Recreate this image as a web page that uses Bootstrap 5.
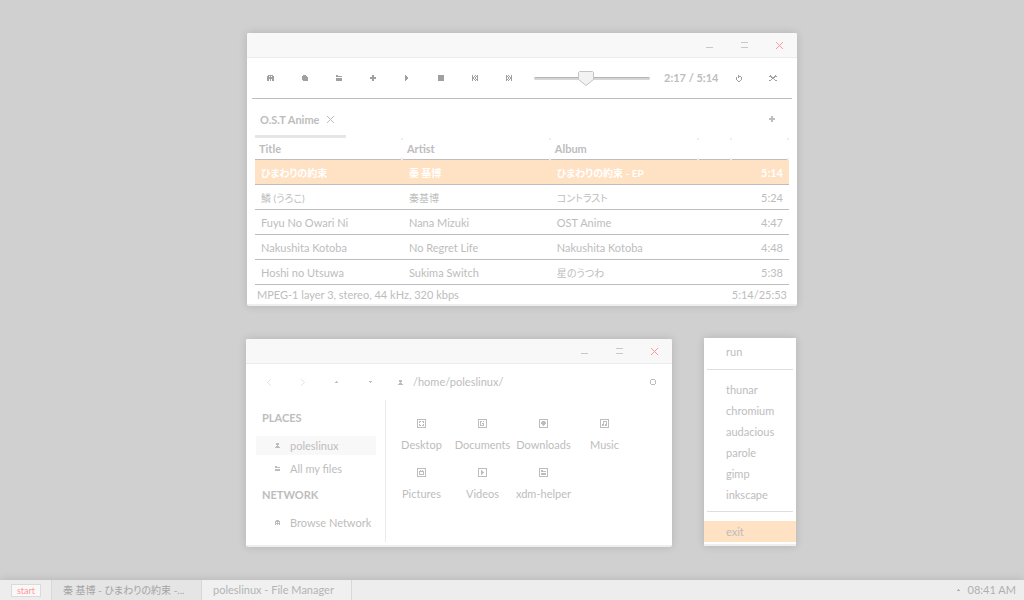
<!DOCTYPE html>
<html lang="en">
<head>
<meta charset="utf-8">
<meta name="viewport" content="width=device-width, initial-scale=1">
<title>Desktop</title>
<link href="https://cdn.jsdelivr.net/npm/bootstrap@5.3.0/dist/css/bootstrap.min.css" rel="stylesheet">
<style>
:root{--ink:#bdbdbd;--icon:#a0a0a0;--peach:#ffe1c3;--line:#bdbdbd;--soft:#ebebeb}
body{background:#d0d0d0;color:var(--ink);font:11px/14px Lato,"Noto Sans CJK JP",sans-serif;min-height:100vh}
button,input{font:inherit}
a,a:hover{color:inherit;text-decoration:none}
svg{display:block;fill:currentColor;shape-rendering:crispEdges}
.ja{font-size:10px;font-feature-settings:"palt"}
.desk{min-height:calc(100vh - 20px)}
.win{position:absolute;background:#fff;border-bottom:2px solid #eee;border-radius:2px;box-shadow:0 0 8px rgba(0,0,0,.14)}
.player{left:247px;top:33px;width:550px}
.files{left:246px;top:339px;width:426px}
.launch{left:704px;top:338px;width:92px;border-radius:0}
.titlebar{height:25px;background:#f8f8f8;border-bottom:1px solid var(--soft);border-radius:2px 2px 0 0}
.tool{border:0;background:none;padding:0 1px 0 0;width:34px;height:24px;display:flex;align-items:center;justify-content:center;color:var(--icon)}
.titlebar .tool{width:35px;padding:0;color:#c8c8c8}
.titlebar .shut svg{color:#f99;fill:#f99}
.tools{height:41px;margin:0 5px;padding:0 2px;border-bottom:1px solid var(--line)}
.seek{appearance:none;width:116px;height:16px;margin:0 14px 0 8px;background:none}
.seek::-webkit-slider-runnable-track{height:3px;background:#d6d6d6;border-top:1px solid #b4b4b4;border-radius:2px}
.seek::-webkit-slider-thumb{appearance:none;width:16px;height:15px;margin-top:-7px;border:0;background:url("data:image/svg+xml,%3Csvg xmlns='http://www.w3.org/2000/svg' width='16' height='15'%3E%3Cpath d='M1.5.5h13l1 1v7l-7.5 6-7.5-6v-7z' fill='%23f2f2f2' stroke='%23c4c4c4'/%3E%3C/svg%3E")}
.tabs{height:39px;padding:0 8px}
.tab{width:91px;padding:5px 0 0 5px;border-bottom:3px solid #e6e6e6}
.tabs .tool{color:var(--ink)}
.tab .tool{width:24px}
.pl{width:calc(100% - 16px);margin:0 8px;table-layout:fixed;border-collapse:separate;border-spacing:0;white-space:nowrap}
.pl th{height:22px;padding:0 4px;border-bottom:1px solid var(--line);position:relative}
.pl th::before,.pl th::after{content:"";position:absolute;right:0;width:2px;height:2px;background:#eee}
.pl th::before{top:0}.pl th::after{bottom:-1px}
.pl td{height:25px;padding:2px 6px 0;border-bottom:1px solid var(--line)}
.pl .now td{background:var(--peach);color:#fff;font-weight:700}
.status{padding:3px 10px 2px}
.nav-row{height:36px;padding:0 2px 0 6px}
.nav-row .tool{color:var(--ink)}
.nav-row .off{color:#e4e4e4}
.side{width:140px;border-right:1px solid var(--soft);padding:10px 9px 10px 10px}
.side h2{font-size:11px;line-height:16px;font-weight:700;margin:0 6px 10px}
.side ul+h2{margin-top:9px}
.side a{height:19px;padding-left:18px;gap:9px}
.side .on{background:#f8f8f8}
.grid{display:grid;grid-template-columns:repeat(auto-fill,61px);grid-auto-rows:33px;row-gap:16px;padding:19px 5px}
.grid a{gap:10px}
.body-row{padding-bottom:3px}
.launch{padding:3px 0 2px}
.launch a{display:block;line-height:21px;padding-left:22px}
.launch a:first-child{margin-bottom:7px}
.launch hr{margin:0 3px 9px;border-color:#dedede;opacity:1}
.launch div a:first-child{margin:0}
.launch div{margin-bottom:6px}
.launch .exit{background:var(--peach)}
.bar{height:20px;background:#ededed;box-shadow:0 0 8px rgba(0,0,0,.14);position:relative}
.start{margin:4px 10px 3px 11px;width:30px;border:1px solid #dadada;background:#f8f8f8;color:#f99;padding:0;font-size:9px;line-height:10px}
.task{width:150px;border:0;border-left:1px solid #d8d8d8;background:#f0f0f0;color:#b4b4b4;padding:0 12px 0 11px;text-align:left}
.task.on{background:#e5e5e5;color:#a4a4a4}
.task:last-of-type{border-right:1px solid #d8d8d8;width:151px}
.clock{color:#b0b0b0}
</style>
</head>
<body>
<svg width="0" height="0" class="position-absolute" aria-hidden="true">
<symbol id="ghost" viewBox="0 0 7 6"><path d="M1 0h5v1h1v5H5V4H4v2H3V4H2v2H0V1h1zM2 1v1h1V1zM4 1v1h1V1z" fill-rule="evenodd"/></symbol>
<symbol id="ghost-s" viewBox="0 0 5 5"><path d="M1 0h3v1h1v4H4V4H3v1H2V4H1v1H0V1h1zM1 2v1h1V2zM3 2v1h1V2z" fill-rule="evenodd"/></symbol>
<symbol id="disc" viewBox="0 0 6 6"><path d="M1 0h3v1h1v1h1v4H1V5H0V1h1z"/></symbol>
<symbol id="folder" viewBox="0 0 6 6"><path d="M0 0h2v1h4v1H0zM0 3h6v3H0z"/></symbol>
<symbol id="folder-s" viewBox="0 0 5 5"><path d="M0 0h2v1h3v1H0zM0 3h5v2H0z"/></symbol>
<symbol id="plus" viewBox="0 0 6 6"><path d="M2 0h2v2h2v2H4v2H2V4H0V2h2z"/></symbol>
<symbol id="play" viewBox="0 0 3 6"><path d="M0 0h1v1h1v1h1v2H2v1H1v1H0z"/></symbol>
<symbol id="stop" viewBox="0 0 6 6"><path d="M0 0h6v6H0z"/></symbol>
<symbol id="prev" viewBox="0 0 6 6"><path d="M0 0h1v6H0zM3 0h1v1H3zM5 0h1v6H5V5H4V4h1V2H4V1h1zM2 1h1v1H2zM1 2h1v2H1zM3 2h1v2H3zM2 4h1v1H2zM3 5h1v1H3z"/></symbol>
<symbol id="cross" viewBox="0 0 7 7"><path d="M0 0h1v1h1v1h1v1h1V2h1V1h1V0h1v1H6v1H5v1H4v1h1v1h1v1h1v1H6V6H5V5H4V4H3v1H2v1H1v1H0V6h1V5h1V4h1V3H2V2H1V1H0z"/></symbol>
<symbol id="reload" viewBox="0 0 6 7"><path d="M2 0h1v1h1v1H3v1H2zM0 2h1v3H0zM1 5h1v1H1zM2 6h2v1H2zM4 5h1v1H4zM5 2h1v3H5zM4 1h1v1H4z"/></symbol>
<symbol id="shuf" viewBox="0 0 8 6"><path d="M1 0h1v1h1v1h2V1h1V0h1v1h1v1H6v1H5v1h1v1h1v1H6V5H5V4H3v1H2v1H1V5h1V4h1V3H2V2H0V1h1zM0 5h1v1H0zM7 5h1v1H7z"/></symbol>
<symbol id="user" viewBox="0 0 5 5"><path d="M1 0h3v2H3v1h1v1h1v1H0V4h1V3h1V2H1z"/></symbol>
<symbol id="min" viewBox="0 0 7 6"><path d="M0 5h7v1H0z"/></symbol>
<symbol id="max" viewBox="0 0 7 6"><path d="M0 0h7v1H0zM0 5h7v1H0z"/></symbol>
<symbol id="back" viewBox="0 0 4 7"><path d="M3 0h1v1H3zM2 1h1v1H2zM1 2h1v1H1zM0 3h1v1H0zM1 4h1v1H1zM2 5h1v1H2zM3 6h1v1H3z"/></symbol>
<symbol id="fwd" viewBox="0 0 4 7"><path d="M0 0h1v1H0zM1 1h1v1H1zM2 2h1v1H2zM3 3h1v1H3zM2 4h1v1H2zM1 5h1v1H1zM0 6h1v1H0z"/></symbol>
<symbol id="up" viewBox="0 0 3 2"><path d="M1 0h1v1h1v1H0V1h1z"/></symbol>
<symbol id="down" viewBox="0 0 3 2"><path d="M0 0h3v1H2v1H1V1H0z"/></symbol>
<symbol id="ring" viewBox="0 0 6 6"><path d="M1 0h4v1h1v4H5v1H1V5H0V1h1zM1 1v4h4V1z" fill-rule="evenodd"/></symbol>
<symbol id="frame" viewBox="0 0 9 9"><path d="M0 0h9v9H0zM1 1v7h7V1z" fill-rule="evenodd"/></symbol>
</svg>

<main class="desk">
<section class="win player" aria-label="Music player">
  <div class="titlebar d-flex justify-content-end">
    <button class="tool" aria-label="Minimize"><svg width="7" height="6"><use href="#min"/></svg></button>
    <button class="tool" aria-label="Maximize"><svg width="7" height="6"><use href="#max"/></svg></button>
    <button class="tool shut" aria-label="Close"><svg width="7" height="7"><use href="#cross"/></svg></button>
  </div>
  <div class="tools d-flex align-items-center">
    <button class="tool" aria-label="Search"><svg width="7" height="6"><use href="#ghost"/></svg></button>
    <button class="tool" aria-label="Disc"><svg width="6" height="6"><use href="#disc"/></svg></button>
    <button class="tool" aria-label="Open"><svg width="6" height="6"><use href="#folder"/></svg></button>
    <button class="tool" aria-label="Add"><svg width="6" height="6"><use href="#plus"/></svg></button>
    <button class="tool" aria-label="Play"><svg width="3" height="6"><use href="#play"/></svg></button>
    <button class="tool" aria-label="Stop"><svg width="6" height="6"><use href="#stop"/></svg></button>
    <button class="tool" aria-label="Previous"><svg width="6" height="6"><use href="#prev"/></svg></button>
    <button class="tool" aria-label="Next"><svg width="6" height="6"><use href="#prev" transform="matrix(-1 0 0 1 6 0)"/></svg></button>
    <input class="seek" type="range" min="0" max="314" value="137" aria-label="Position">
    <b>2:17 / 5:14</b>
    <div class="d-flex ms-auto"><button class="tool" aria-label="Repeat"><svg width="6" height="7"><use href="#reload"/></svg></button>
    <button class="tool" aria-label="Shuffle"><svg width="8" height="6"><use href="#shuf"/></svg></button></div>
  </div>
  <div class="tabs d-flex justify-content-between">
    <div class="tab d-flex align-items-center"><b>O.S.T Anime</b><button class="tool" aria-label="Close tab"><svg width="7" height="7"><use href="#cross"/></svg></button></div>
    <button class="tool mt-2" aria-label="New tab"><svg width="6" height="6"><use href="#plus"/></svg></button>
  </div>
  <table class="pl">
    <colgroup><col style="width:27.7%"><col style="width:27.7%"><col style="width:27.7%"><col style="width:6.2%"><col></colgroup>
    <thead><tr><th>Title</th><th>Artist</th><th>Album</th><th></th><th></th></tr></thead>
    <tbody>
    <tr class="now"><td class="ja">ひまわりの約束</td><td class="ja">秦 基博</td><td class="ja">ひまわりの約束 - EP</td><td></td><td class="text-end">5:14</td></tr>
    <tr><td class="ja">鱗 (うろこ)</td><td class="ja">秦基博</td><td class="ja">コントラスト</td><td></td><td class="text-end">5:24</td></tr>
    <tr><td>Fuyu No Owari Ni</td><td>Nana Mizuki</td><td>OST Anime</td><td></td><td class="text-end">4:47</td></tr>
    <tr><td>Nakushita Kotoba</td><td>No Regret Life</td><td>Nakushita Kotoba</td><td></td><td class="text-end">4:48</td></tr>
    <tr><td>Hoshi no Utsuwa</td><td>Sukima Switch</td><td class="ja">星のうつわ</td><td></td><td class="text-end">5:38</td></tr>
    </tbody>
  </table>
  <div class="status d-flex justify-content-between"><span>MPEG-1 layer 3, stereo, 44 kHz, 320 kbps</span><span>5:14/25:53</span></div>
</section>

<section class="win files" aria-label="File manager">
  <div class="titlebar d-flex justify-content-end">
    <button class="tool" aria-label="Minimize"><svg width="7" height="6"><use href="#min"/></svg></button>
    <button class="tool" aria-label="Maximize"><svg width="7" height="6"><use href="#max"/></svg></button>
    <button class="tool shut" aria-label="Close"><svg width="7" height="7"><use href="#cross"/></svg></button>
  </div>
  <div class="nav-row d-flex align-items-center">
    <button class="tool off" aria-label="Back"><svg width="4" height="7"><use href="#back"/></svg></button>
    <button class="tool off" aria-label="Forward"><svg width="4" height="7"><use href="#fwd"/></svg></button>
    <button class="tool" aria-label="Up"><svg width="3" height="2"><use href="#up"/></svg></button>
    <button class="tool" aria-label="Down"><svg width="3" height="2"><use href="#down"/></svg></button>
    <svg class="ms-2 me-2" width="9" height="5"><use href="#user"/></svg><span>/home/poleslinux/</span>
    <button class="tool ms-auto" aria-label="Reload"><svg width="6" height="6"><use href="#ring"/></svg></button>
  </div>
  <div class="body-row d-flex">
    <nav class="side">
      <h2>PLACES</h2>
      <ul class="list-unstyled mb-0 d-flex flex-column gap-1">
        <li><a href="#" class="on d-flex align-items-center"><svg width="7" height="5"><use href="#user"/></svg>poleslinux</a></li>
        <li><a href="#" class="d-flex align-items-center"><svg width="7" height="5"><use href="#folder-s"/></svg>All my files</a></li>
      </ul>
      <h2>NETWORK</h2>
      <ul class="list-unstyled mb-0"><li><a href="#" class="d-flex align-items-center text-nowrap"><svg width="7" height="5"><use href="#ghost-s"/></svg>Browse Network</a></li></ul>
    </nav>
    <div class="grid flex-fill">
      <a href="#" class="d-flex flex-column align-items-center"><svg width="9" height="9"><use href="#frame"/><path d="M2 2h2v1H3v1H2zM5 2h2v2H6V3H5zM2 5h1v1h1v1H2zM6 5h1v2H5V6h1z"/></svg>Desktop</a>
      <a href="#" class="d-flex flex-column align-items-center"><svg width="9" height="9"><use href="#frame"/><path d="M2 2h2v1H3v3h2V5H4V4h2v3H2zM5 2h1v1H5z"/></svg>Documents</a>
      <a href="#" class="d-flex flex-column align-items-center"><svg width="9" height="9"><use href="#frame"/><path d="M3 2h3v1h1v2H6v1H5v1H4V6H3V5H2V3h1z"/></svg>Downloads</a>
      <a href="#" class="d-flex flex-column align-items-center"><svg width="9" height="9"><use href="#frame"/><path d="M3 2h4v5H5V5h1V3H4v4H2V5h1z"/></svg>Music</a>
      <a href="#" class="d-flex flex-column align-items-center"><svg width="9" height="9"><use href="#frame"/><path d="M3 2h1v1h1V2h1v1h1v4H2V3h1zM3 4v2h3V4z" fill-rule="evenodd"/></svg>Pictures</a>
      <a href="#" class="d-flex flex-column align-items-center"><svg width="9" height="9"><use href="#frame"/><path d="M3 2h1v1h1v1h1v1H5v1H4v1H3z"/></svg>Videos</a>
      <a href="#" class="d-flex flex-column align-items-center"><svg width="9" height="9"><use href="#frame"/><path d="M2 2h2v1h3v1H2zM2 5h5v2H2z"/></svg>xdm-helper</a>
    </div>
  </div>
</section>

<nav class="win launch" aria-label="Applications">
  <a href="#">run</a><hr>
  <div><a href="#">thunar</a><a href="#">chromium</a><a href="#">audacious</a><a href="#">parole</a><a href="#">gimp</a><a href="#">inkscape</a></div>
  <hr><a href="#" class="exit">exit</a>
</nav>
</main>

<footer class="bar d-flex align-items-stretch">
  <button class="start">start</button>
  <button class="task on ja text-nowrap">秦 基博 - ひまわりの約束 -...</button>
  <button class="task text-truncate">poleslinux - File Manager</button>
  <div class="clock d-flex align-items-center ms-auto me-2 gap-2"><svg width="3" height="2"><use href="#up"/></svg><span>08:41 AM</span></div>
</footer>
<script src="https://cdn.jsdelivr.net/npm/bootstrap@5.3.0/dist/js/bootstrap.bundle.min.js"></script>
</body>
</html>
